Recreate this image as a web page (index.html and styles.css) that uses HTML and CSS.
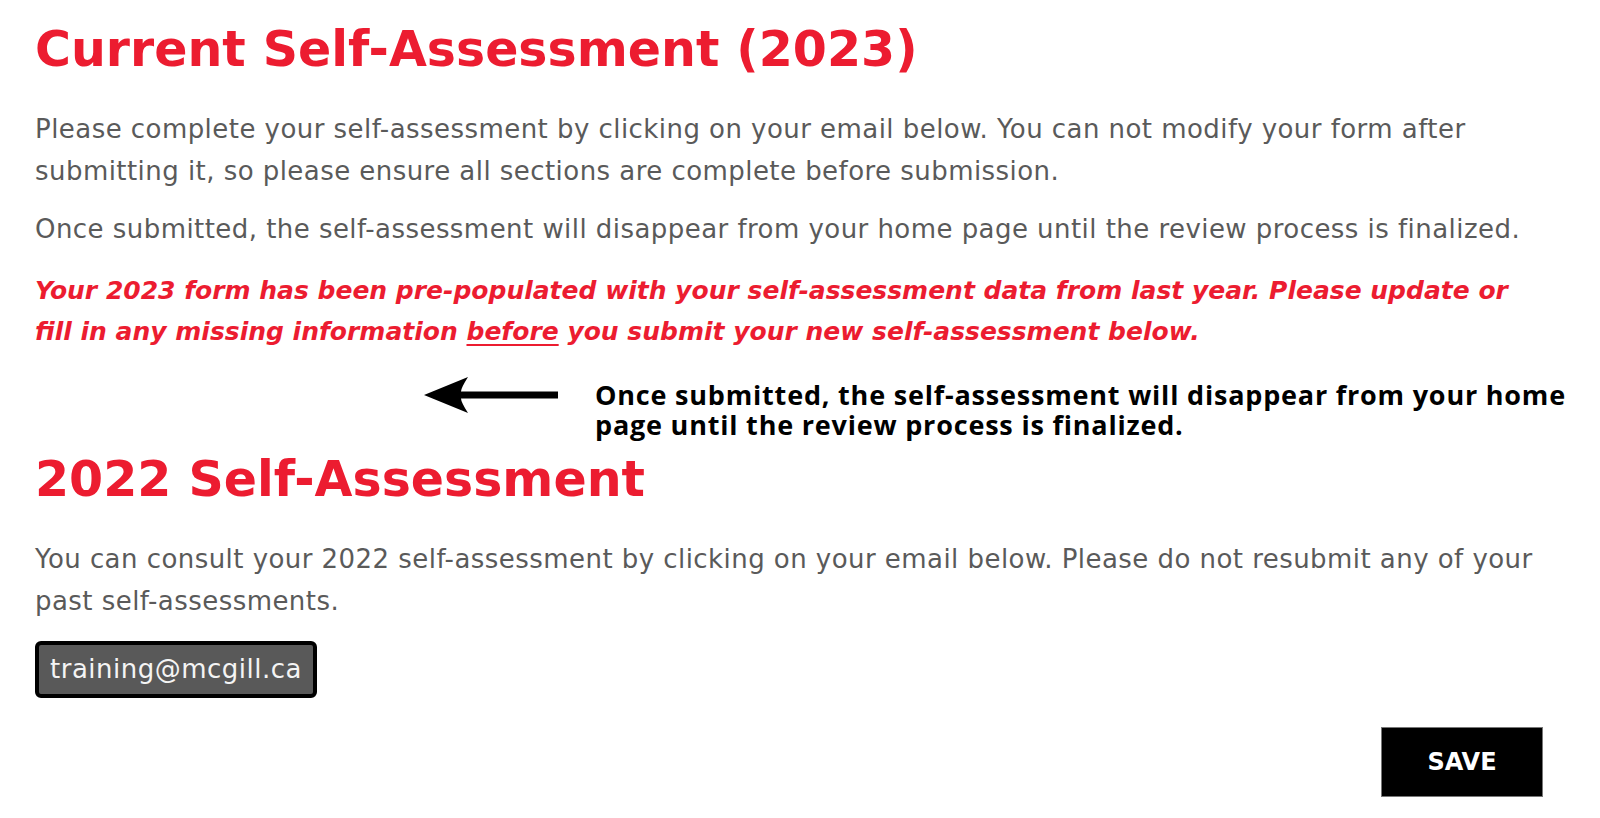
FILE: index.html
```html
<!DOCTYPE html>
<html lang="en">
<head>
<meta charset="utf-8">
<title>Self-Assessment</title>
<link rel="stylesheet" href="styles.css">
</head>
<body>
<main class="page">
  <section class="current">
    <h1 class="title">Current Self-Assessment (2023)</h1>
    <p class="text first">Please complete your self-assessment by clicking on your email below. You can not modify your form after submitting it, so please ensure all sections are complete before submission.</p>
    <p class="text">Once submitted, the self-assessment will disappear from your home page until the review process is finalized.</p>
    <p class="notice">Your 2023 form has been pre-populated with your self-assessment data from last year. Please update or fill in any missing information <u class="em-u">before</u> you submit your new self-assessment below.</p>
  </section>

  <div class="annotation">
    <svg class="arrow" width="134" height="38" viewBox="0 0 134 38" aria-hidden="true">
      <path d="M0 19 L44 1 Q37 12 37 15.5 L134 15.5 L134 22.5 L37 22.5 Q37 26 44 37 Z" fill="#000"/>
    </svg>
    <p class="annotation-text">Once submitted, the self-assessment will disappear from your home page until the review process is finalized.</p>
  </div>

  <section class="past">
    <h2 class="title">2022 Self-Assessment</h2>
    <p class="text first">You can consult your 2022 self-assessment by clicking on your email below. Please do not resubmit any of your past self-assessments.</p>
    <a class="email" href="#">training@mcgill.ca</a>
  </section>

  <div class="actions">
    <button class="save" type="button">SAVE</button>
  </div>
</main>
</body>
</html>
```

FILE: styles.css
```css
html, body {
  margin: 0;
  padding: 0;
  background: #fff;
}

.page {
  padding: 14px 50px 0 35px;
  font-family: "DejaVu Sans", "Liberation Sans", sans-serif;
}

.title {
  margin: 0;
  font-family: "DejaVu Sans", "Liberation Sans", sans-serif;
  font-size: 49px;
  line-height: 72px;
  font-weight: 700;
  color: #ec1c30;
}

.text {
  margin: 16px 0 0;
  font-size: 26px;
  line-height: 42px;
  letter-spacing: 0.45px;
  color: #5a5a5a;
  font-weight: 400;
}

.text.first {
  margin-top: 22px;
}

.notice {
  margin: 20px 0 0;
  font-size: 25px;
  line-height: 41px;
  font-weight: 700;
  font-style: italic;
  color: #ec1c30;
}

.em-u {
  text-decoration-thickness: 2px;
  text-underline-offset: 4px;
}

.annotation {
  display: flex;
  align-items: flex-start;
  gap: 37px;
  margin: 28px -40px 0 389px;
}

.arrow {
  flex: none;
  margin-top: -4px;
}

.annotation-text {
  margin: 0;
  font-family: "Open Sans", "Liberation Sans", sans-serif;
  font-weight: 700;
  font-size: 27px;
  line-height: 30px;
  letter-spacing: 0.8px;
  color: #000;
}

.past {
  margin-top: 4px;
}

.email {
  display: block;
  width: fit-content;
  margin-top: 19px;
  padding: 0 11px;
  height: 49px;
  line-height: 49px;
  border: 4px solid #000;
  border-radius: 6px;
  background: #595959;
  color: #f4f4f4;
  font-size: 26px;
  letter-spacing: 0.5px;
  text-decoration: none;
}

.actions {
  display: flex;
  justify-content: flex-end;
  margin-top: 29px;
  margin-right: 7px;
}

.save {
  width: 162px;
  height: 70px;
  padding: 0;
  background: #000;
  border: 1px solid #777;
  color: #fff;
  font-family: "DejaVu Sans", "Liberation Sans", sans-serif;
  font-size: 24px;
  font-weight: 700;
  cursor: pointer;
}
```
